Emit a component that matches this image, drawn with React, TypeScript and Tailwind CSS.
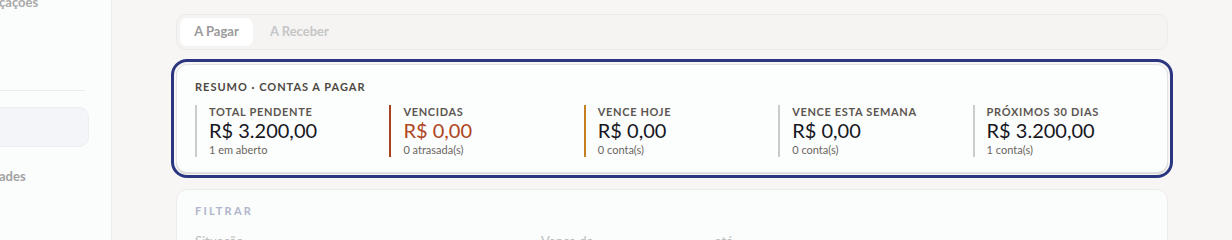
import React from "react";

const cols = [
  { label: "TOTAL PENDENTE", value: "R$ 3.200,00", sub: "1 em aberto", border: "border-[#cbcbcb]", color: "text-[#17171f]" },
  { label: "VENCIDAS", value: "R$ 0,00", sub: "0 atrasada(s)", border: "border-[#a9411f]", color: "text-[#b0451f]" },
  { label: "VENCE HOJE", value: "R$ 0,00", sub: "0 conta(s)", border: "border-[#c47f22]", color: "text-[#17171f]" },
  { label: "VENCE ESTA SEMANA", value: "R$ 0,00", sub: "0 conta(s)", border: "border-[#cbcbcb]", color: "text-[#17171f]" },
  { label: "PRÓXIMOS 30 DIAS", value: "R$ 3.200,00", sub: "1 conta(s)", border: "border-[#cbcbcb]", color: "text-[#17171f]" },
];

export default function App() {
  return (
    <div className="flex h-[240px] w-[1232px] overflow-hidden bg-[#f7f6f5]" style={{ fontFamily: "Lato, 'Noto Sans', sans-serif" }}>
      <aside className="w-[112px] shrink-0 border-r border-[#ececec] bg-[#fbfcfc] overflow-hidden">
        <div className="-mt-[8px] -ml-[1px] text-[13px] font-bold text-[#a9a9a9] leading-[20px]">çações</div>
        <div className="mt-[78px] h-px w-[85px] bg-[#ececec]"></div>
        <div className="mt-[16px] h-[40px] w-[99px] -ml-[10px] rounded-[10px] border border-[#eceef3] bg-[#f4f5f8]"></div>
        <div className="mt-[19px] text-[13px] font-bold text-[#a2a2a2] leading-[20px] -ml-[1px]">ades</div>
      </aside>
      <main className="flex-1 px-[64px] pt-[14px]">
        <div className="flex h-[36px] items-center gap-[4px] rounded-[10px] border border-[#ecebe9] bg-[#f5f4f3] p-[3px]">
          <div className="flex h-[28px] w-[73px] items-center justify-center rounded-[7px] bg-white text-[13px] font-bold text-[#9a9a9a]">A Pagar</div>
          <div className="flex h-[28px] items-center px-[13px] text-[13px] font-bold text-[#c6c6c6]">A Receber</div>
        </div>
        <div className="mt-[14px] rounded-[11px] border border-[#e2e2e0] bg-[#fcfdfd] px-[18px] pt-[15px] pb-[15px] shadow-[0_1px_0_#d8d8d6] outline-[3px] outline-solid outline-[#2b3680] outline-offset-[2px]">
          <div className="text-[11px] font-bold tracking-[0.09em] text-[#4d4842] leading-[14px]">RESUMO · CONTAS A PAGAR</div>
          <div className="mt-[11px] grid grid-cols-5 gap-[18px]">
            {cols.map((c) => (
              <div key={c.label} className={`border-l-2 ${c.border} pl-[12px] h-[52px]`}>
                <div className="text-[11px] font-bold tracking-[0.06em] text-[#5b5650] leading-[14px]">{c.label}</div>
                <div className={`text-[20px] ${c.color} leading-[22px]`}>{c.value}</div>
                <div className="mt-[2px] text-[11px] text-[#6a655f] leading-[13px]">{c.sub}</div>
              </div>
            ))}
          </div>
        </div>
        <div className="mt-[16px] h-[80px] rounded-[11px] border border-[#ecebe9] bg-[#fbfcfc] px-[18px] pt-[14px]">
          <div className="text-[11px] font-bold tracking-[0.2em] text-[#b0b6cb] leading-[14px]">FILTRAR</div>
          <div className="mt-[15px] flex text-[13px] text-[#bcbcbc] leading-[16px]">
            <div className="w-[346px]">Situação</div>
            <div className="w-[174px]">Vence de</div>
            <div>até</div>
          </div>
        </div>
      </main>
    </div>
  );
}
